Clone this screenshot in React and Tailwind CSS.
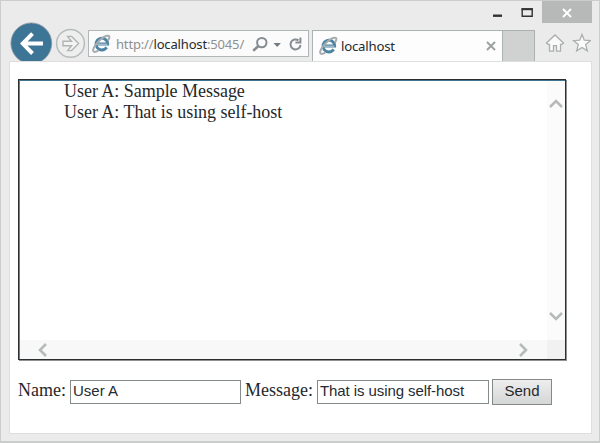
import React from "react";

const ui = "font-['Noto_Sans','Open_Sans',sans-serif]";
const serif = "font-['Liberation_Serif',serif]";
const sans = "font-['Liberation_Sans',sans-serif]";

function IeLogo() {
  return (
    <svg width="19" height="20" viewBox="0 0 19 20" fill="none" className="shrink-0">
      <path d="M14.7 13.4a5.9 5.9 0 1 1 1-3.4H5" stroke="#4d83a3" strokeWidth="2.8" />
      <path d="M4.2 10.2h11" stroke="#dfe9ef" strokeWidth="0.8" />
      <path d="M15.8 6.6C18 3.4 18 1.3 15.2 1.7 11 2.3 4.4 8.5 2 13.4c-2 4.3-.3 5.8 4.2 3.2" stroke="#a5acaf" strokeWidth="2" />
    </svg>
  );
}

function Chevron({ d }) {
  return (
    <svg width="16" height="16" viewBox="0 0 16 16" fill="none" className="shrink-0">
      <path d={d} stroke="#b7baba" strokeWidth="2.6" />
    </svg>
  );
}

function TitleBar() {
  return (
    <div className="flex h-[21px] shrink-0 justify-end pr-[7px]">
      <svg width="50" height="23" viewBox="0 0 50 23" fill="none" className="mr-[1px]">
        <path d="M2 14.7h9" stroke="#303235" strokeWidth="2.4" />
        <path d="M31.2 8h10v7.3h-10z" stroke="#303235" strokeWidth="1.4" />
        <path d="M30.5 8.2h11.4" stroke="#303235" strokeWidth="2" />
      </svg>
      <div className="flex h-[22px] w-[50px] shrink-0 items-center justify-center bg-[#b7b9b9]">
        <svg width="10" height="10" viewBox="0 0 10 10" className="mt-[2px]">
          <path d="M1 1l8 8M9 1L1 9" stroke="#fff" strokeWidth="1.9" />
        </svg>
      </div>
    </div>
  );
}

function Toolbar() {
  return (
    <div className="flex h-[39px] shrink-0 items-start overflow-hidden pl-[9px]">
      <svg width="78" height="39" viewBox="0 0 78 39" fill="none" className="shrink-0">
        <circle cx="21.3" cy="21.3" r="20.4" fill="#3d7596" stroke="#8c979e" strokeWidth="0.8" />
        <path d="M33 21.6H13M22.5 11.7l-9.7 9.9 9.7 9.9" stroke="#fff" strokeWidth="4" />
        <circle cx="60.5" cy="21.4" r="13.9" fill="#eee" stroke="#b8bcbc" strokeWidth="1.5" />
        <path d="M53 19.2h8.5l-3.8-4.8h3.9l7 7.1-7 7.1h-3.9l3.8-4.8H53z" fill="#f3f3f3" stroke="#b0b4b4" strokeWidth="1.4" />
      </svg>
      <div className="mt-[8px] flex h-[27px] w-[221px] shrink-0 items-center border border-[#b1b7b8] bg-[#fbfbfb] pl-[3px]">
        <IeLogo />
        <span className={`${ui} ml-[5px] w-[130px] whitespace-nowrap text-[13px] leading-5 tracking-[-0.16px] text-[#8d9191]`}>
          http://<span className="text-[#252a2d]">localhost</span>:5045/
        </span>
        <svg width="54" height="20" viewBox="0 0 54 20" fill="none" className="ml-[5px] shrink-0">
          <circle cx="10.8" cy="8.6" r="4.7" stroke="#858d91" strokeWidth="2" />
          <path d="M7.4 12L2.2 16.8" stroke="#858d91" strokeWidth="2.6" />
          <path d="M22.5 9h7.4l-3.7 4z" fill="#737b80" />
          <path d="M47.5 6.4a5 5 0 1 0 2 4.4" stroke="#858d91" strokeWidth="2" />
          <path d="M44.4 8.6h5V3.4" stroke="#858d91" strokeWidth="2" />
        </svg>
      </div>
      <div className="ml-[3px] mt-[8px] flex h-[31px] w-[191px] shrink-0 items-center border-x border-t border-[#adb3b4] bg-[#fdfdfd] pl-[6px]">
        <IeLogo />
        <span className={`${ui} ml-[3px] w-[56px] text-[13.2px] leading-5 tracking-[-0.2px] text-[#24292d]`}>localhost</span>
        <svg width="10" height="10" viewBox="0 0 10 10" className="ml-[89px]">
          <path d="M1 1l8 8M9 1L1 9" stroke="#9a9e9e" strokeWidth="1.8" />
        </svg>
      </div>
      <div className="mt-[8px] h-[31px] w-[32px] shrink-0 border-r border-t border-[#adb1b2] bg-[#d0d2d2]" />
      <svg width="56" height="31" viewBox="0 0 56 31" fill="none" className="mt-[8px] shrink-0">
        <path d="M11.5 13L20 5l8.5 8-1.5 1.3h-1.5v6.9h-4v-5.5h-3v5.5h-4v-6.9H13z" fill="#fafafa" stroke="#aaaeae" strokeWidth="1.3" />
        <path d="M47 4.5l2.3 5.7 6.1.5-4.7 3.9 1.6 6.3-5.3-3.4-5.3 3.4 1.6-6.3-4.7-3.9 6.1-.5z" fill="#fafafa" stroke="#aaaeae" strokeWidth="1.3" />
      </svg>
    </div>
  );
}

function MessageBox() {
  return (
    <div className="flex h-[281px] w-[548px] flex-col border border-[#2c2f31] pl-px pt-px shadow-[inset_0_1px_0_#3f7590,inset_1px_0_0_#777a7b,1px_1px_0_#8f9293]">
      <div className="flex flex-1">
        <div className={`${serif} flex-1 whitespace-nowrap pl-[44px] text-[18px] leading-[21px] tracking-[-0.03px] text-[#25282b]`}>
          <div>User A: Sample Message</div>
          <div>User A: That is using self-host</div>
        </div>
        <div className="flex w-[18px] flex-col items-center justify-between bg-[#fbfbfb] pb-[16px] pt-[15px]">
          <Chevron d="M2 11l6-6 6 6" />
          <Chevron d="M2 5l6 6 6-6" />
        </div>
      </div>
      <div className="flex h-[19px] items-center bg-[#f8f8f8]">
        <div className="flex flex-1 items-center justify-between pl-[15px] pr-[16px]">
          <Chevron d="M11 2L5 8l6 6" />
          <Chevron d="M5 2l6 6-6 6" />
        </div>
        <div className="h-full w-[18px] bg-[#f1f1f1]" />
      </div>
    </div>
  );
}

function MessageForm() {
  const field = `${sans} h-[24px] border border-[#858a8b] bg-white px-[2px] pb-[2px] text-[15px] text-[#242b31] outline-none`;
  return (
    <div className={`${serif} mt-[17px] flex h-[27px] items-center whitespace-nowrap text-[18px] text-[#25282b]`}>
      <label className="w-[52px] pb-[2px]">Name:</label>
      <input aria-label="Name" className={`${field} w-[171px]`} defaultValue="User A" />
      <label className="ml-[4px] w-[72px] pb-[2px]">Message:</label>
      <input aria-label="Message" className={`${field} w-[172px] tracking-[-0.08px]`} defaultValue="That is using self-host" />
      <button className={`${sans} ml-[3px] h-[26px] w-[60px] border border-[#858989] bg-linear-to-b from-[#eeeeee] to-[#d5d6d6] pb-px text-[15px]`}>
        Send
      </button>
    </div>
  );
}

export default function App() {
  return (
    <div className="flex h-[443px] w-[600px] flex-col overflow-hidden border border-b-2 border-[#cbcccc] bg-[#ebebeb]">
      <TitleBar />
      <Toolbar />
      <main className="ml-[8px] h-[373px] w-[583px] border border-[#dedede] bg-white pl-[8px] pt-[17px]">
        <MessageBox />
        <div className="h-px" />
        <MessageForm />
      </main>
    </div>
  );
}
